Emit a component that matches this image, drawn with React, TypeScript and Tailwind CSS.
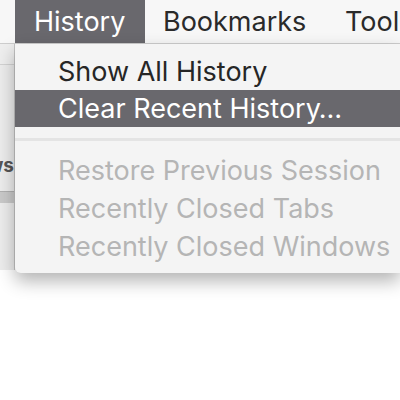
import React from "react";

export default function App() {
  return (
    <div className="w-[400px] h-[400px] bg-white overflow-hidden font-['Inter','Liberation_Sans',sans-serif] text-[27px] leading-none">
      {/* Menu bar */}
      <div className="flex h-[44px] bg-[#f7f7f7] border-b border-[#cdcdcd] text-[#2a2a2a] whitespace-nowrap">
        <div className="w-[15px] shrink-0" />
        <div className="w-[130px] shrink-0 bg-[#69686d] text-white pl-[19px] flex items-center">History</div>
        <div className="w-[182px] shrink-0 pl-[18px] flex items-center">Bookmarks</div>
        <div className="shrink-0 pl-[18px] flex items-center">Tools</div>
      </div>
      {/* Body */}
      <div className="flex items-start">
        {/* background window strip */}
        <div className="w-[15px] shrink-0 h-[226px] bg-[#ececec] border-r border-[#c4c4c4] flex flex-col overflow-hidden">
          <div className="h-[21px] border-b border-[#d2d2d2] bg-[#eeeeee]" />
          <div className="h-[93px]" />
          <div className="h-[16px] relative">
            <span className="absolute right-[0px] top-0 text-[19px] font-bold text-[#555] leading-[16px]">ws</span>
          </div>
          <div className="h-[17px]" />
          <div className="h-[12px] bg-[#c9c9c9] border-t border-[#b0b0b0]" />
        </div>
        {/* menu */}
        <div className="flex-1 relative z-10 bg-[#f4f4f4] rounded-bl-[6px] shadow-[0_8px_18px_rgba(0,0,0,0.3)] pt-[9px] pb-[8px] whitespace-nowrap">
          <div className="h-[37px] pl-[43px] flex items-center text-[#262626]">Show All History</div>
          <div className="h-[37px] pl-[43px] flex items-center bg-[#69686d] text-white">Clear Recent History…</div>
          <div className="pt-[11px] pb-[10px]">
            <div className="h-[3px] bg-[#e4e4e4]" />
          </div>
          <div className="h-[38px] pl-[43px] flex items-center text-[#b5b5b5]">Restore Previous Session</div>
          <div className="h-[38px] pl-[43px] flex items-center text-[#b5b5b5]">Recently Closed Tabs</div>
          <div className="h-[38px] pl-[43px] flex items-center text-[#b5b5b5]">Recently Closed Windows</div>
        </div>
      </div>
    </div>
  );
}
